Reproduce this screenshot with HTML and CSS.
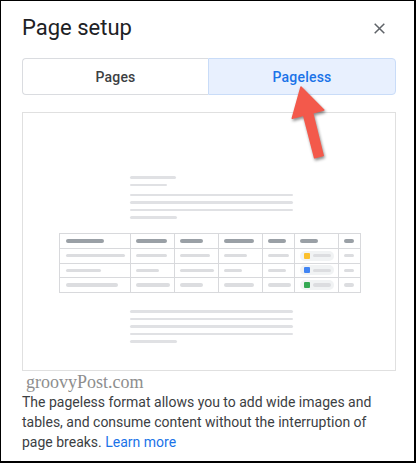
FILE: index.html
```html
<!DOCTYPE html>
<html>
<head>
<meta charset="utf-8">
<link rel="stylesheet" href="styles.css">
</head>
<body>
<div class="dialog">
  <div class="header">
    <h1 class="title">Page setup</h1>
    <svg class="close" width="11" height="11" viewBox="0 0 11 11"><path d="M0.7 0.7 L10.3 10.3 M10.3 0.7 L0.7 10.3" stroke="#5f6368" stroke-width="1.5" fill="none"/></svg>
  </div>
  <div class="toggle">
    <div class="seg seg-off">Pages</div>
    <div class="seg seg-on">Pageless</div>
  </div>
  <div class="preview">
    <div class="doc">
      <div class="ln" style="width:46px"></div>
      <div class="ln" style="width:37px"></div>
      <div class="para">
        <div class="ln"></div>
        <div class="ln"></div>
        <div class="ln"></div>
        <div class="ln" style="width:47px"></div>
      </div>
    </div>
    <div class="tbl">
      <div class="c"><i class="p h" style="width:38px"></i></div>
      <div class="c"><i class="p h" style="width:31px"></i></div>
      <div class="c"><i class="p h" style="width:23px"></i></div>
      <div class="c"><i class="p h" style="width:30px"></i></div>
      <div class="c"><i class="p h" style="width:18px"></i></div>
      <div class="c"><i class="p h" style="width:18px"></i></div>
      <div class="c"><i class="p h" style="width:10px"></i></div>

      <div class="c"><i class="p" style="width:59px"></i></div>
      <div class="c"><i class="p" style="width:31px"></i></div>
      <div class="c"><i class="p" style="width:30px"></i></div>
      <div class="c"><i class="p" style="width:23px"></i></div>
      <div class="c"><i class="p" style="width:21px"></i></div>
      <div class="c"><span class="chip"><b class="sq yellow"></b><i class="p" style="width:18px"></i></span></div>
      <div class="c"><i class="p" style="width:10px"></i></div>

      <div class="c"><i class="p" style="width:35px"></i></div>
      <div class="c"><i class="p" style="width:23px"></i></div>
      <div class="c"><i class="p" style="width:34px"></i></div>
      <div class="c"><i class="p" style="width:18px"></i></div>
      <div class="c"><i class="p" style="width:18px"></i></div>
      <div class="c"><span class="chip"><b class="sq blue"></b><i class="p" style="width:18px"></i></span></div>
      <div class="c"><i class="p" style="width:10px"></i></div>

      <div class="c"><i class="p" style="width:52px"></i></div>
      <div class="c"><i class="p" style="width:34px"></i></div>
      <div class="c"><i class="p" style="width:23px"></i></div>
      <div class="c"><i class="p" style="width:30px"></i></div>
      <div class="c"><i class="p" style="width:23px"></i></div>
      <div class="c"><span class="chip"><b class="sq green"></b><i class="p" style="width:18px"></i></span></div>
      <div class="c"><i class="p" style="width:10px"></i></div>
    </div>
    <div class="doc doc-bottom">
      <div class="ln"></div>
      <div class="ln"></div>
      <div class="ln"></div>
      <div class="ln"></div>
      <div class="ln" style="width:47px"></div>
    </div>
  </div>
  <div class="watermark">groovyPost.com</div>
  <p class="desc">The pageless format allows you to add wide images and tables, and consume content without the interruption of page breaks. <a class="link">Learn more</a></p>

  <svg class="arrow" width="60" height="90" viewBox="280 80 60 90">
    <polygon points="301,87 323.8,110 312.6,113 323.2,155.6 314.6,157.8 303.6,115.2 292.3,118.2" fill="#f3594b" stroke="#f3594b" stroke-width="1.5" stroke-linejoin="round"/>
  </svg>
</div>
</body>
</html>
```

FILE: styles.css
```css
* { box-sizing: border-box; }
html, body { margin: 0; padding: 0; background: #fff; }
.dialog {
  position: relative;
  width: 416px;
  height: 463px;
  border: 1px solid #000;
  border-right-width: 2px;
  border-bottom-width: 2px;
  padding: 13px 18px 0 21px;
  font-family: Roboto, "Liberation Sans", Arial, sans-serif;
  background: #fff;
}
.header {
  display: flex;
  align-items: center;
  justify-content: space-between;
  height: 28px;
}
.title {
  margin: 0;
  font-size: 22px;
  line-height: 28px;
  font-weight: 400;
  color: #202124;
}
.close { margin-right: 11px; margin-top: 0; display: block; }
.toggle {
  margin-top: 16px;
  display: grid;
  grid-template-columns: 186px 188px;
  height: 37px;
}
.seg {
  display: flex;
  align-items: center;
  justify-content: center;
  font-size: 14px;
  font-weight: 500;
  letter-spacing: 0.2px;
}
.seg-off {
  border: 1px solid #dadce0;
  border-right: none;
  border-radius: 4px 0 0 4px;
  color: #3c4043;
  background: #fff;
}
.seg-on {
  border: 1px solid #c9dcf8;
  border-radius: 0 4px 4px 0;
  background: #e8f0fe;
  color: #1a73e8;
}
.preview {
  margin-top: 17px;
  height: 259px;
  border: 1px solid #e0e0e0;
  padding-top: 63px;
  display: flex;
  flex-direction: column;
  align-items: flex-start;
}
.doc {
  margin-left: 107px;
  width: 163px;
  display: flex;
  flex-direction: column;
  gap: 5px;
}
.para {
  margin-top: 2.5px;
  display: flex;
  flex-direction: column;
  gap: 5px;
}
.ln {
  height: 2.5px;
  width: 163px;
  background: #e0e1e4;
  border-radius: 2px;
}
.tbl {
  margin-top: 14.5px;
  margin-left: 36px;
  display: grid;
  grid-template-columns: 71px 44px 44px 44px 32px 44px 22px;
  grid-auto-rows: 14.75px;
  border-left: 1px solid #d8d9dc;
  border-top: 1px solid #d8d9dc;
}
.c {
  border-right: 1px solid #d8d9dc;
  border-bottom: 1px solid #d8d9dc;
  display: flex;
  align-items: center;
  padding-left: 5px;
}
.c:nth-child(7n+1) { padding-left: 6px; }
.p {
  display: block;
  height: 3.5px;
  border-radius: 2px;
  background: #dcdde0;
}
.p.h { background: #9aa0a6; }
.chip {
  display: flex;
  align-items: center;
  gap: 2.5px;
  width: 34px;
  height: 10px;
  border-radius: 5px;
  background: #f1f3f4;
  padding-left: 4px;
}
.sq {
  display: block;
  width: 6px;
  height: 6px;
  border-radius: 1px;
}
.yellow { background: #fbc02d; }
.blue { background: #4285f4; }
.green { background: #34a853; }
.doc-bottom { margin-top: 17px; }
.watermark {
  margin-top: 2px;
  padding-left: 4px;
  font-family: "Liberation Serif", "Times New Roman", serif;
  font-size: 18px;
  line-height: 18px;
  color: #8e8e8e;
}
.desc {
  margin: 1px 0 0 0;
  font-size: 14px;
  line-height: 20px;
  color: #3c4043;
}
.link { color: #1a73e8; text-decoration: none; }
.arrow {
  position: absolute;
  left: 279px;
  top: 79px;
  filter: drop-shadow(1px 2px 1.5px rgba(0,0,0,0.45));
  overflow: visible;
}
```
